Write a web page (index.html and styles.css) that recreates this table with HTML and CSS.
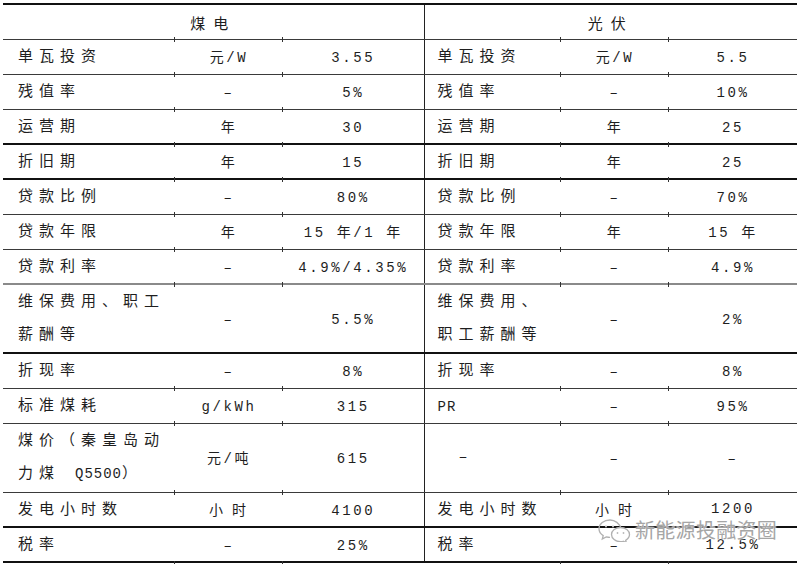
FILE: index.html
```html
<!DOCTYPE html>
<html lang="zh">
<head>
<meta charset="utf-8">
<link rel="stylesheet" href="styles.css">
</head>
<body>
<table class="cmp">
  <colgroup>
    <col class="w1"><col class="w2"><col class="w3"><col class="w4"><col class="w5"><col class="w6">
  </colgroup>
  <tr class="hd">
    <th colspan="3" class="h">煤电</th>
    <th colspan="3" class="h sep">光伏</th>
  </tr>
  <tr class="r">
    <td class="k">单瓦投资</td><td class="v t">元/W</td><td class="v t">3.55</td>
    <td class="k sep">单瓦投资</td><td class="v t">元/W</td><td class="v t">5.5</td>
  </tr>
  <tr class="r">
    <td class="k">残值率</td><td class="v t">–</td><td class="v t">5%</td>
    <td class="k sep">残值率</td><td class="v t">–</td><td class="v t">10%</td>
  </tr>
  <tr class="r thick">
    <td class="k">运营期</td><td class="v t">年</td><td class="v t">30</td>
    <td class="k sep">运营期</td><td class="v t">年</td><td class="v t">25</td>
  </tr>
  <tr class="r thick">
    <td class="k">折旧期</td><td class="v t">年</td><td class="v t">15</td>
    <td class="k sep">折旧期</td><td class="v t">年</td><td class="v t">25</td>
  </tr>
  <tr class="r">
    <td class="k">贷款比例</td><td class="v t">–</td><td class="v t">80%</td>
    <td class="k sep">贷款比例</td><td class="v t">–</td><td class="v t">70%</td>
  </tr>
  <tr class="r">
    <td class="k">贷款年限</td><td class="v t">年</td><td class="v t">15 年/1 年</td>
    <td class="k sep">贷款年限</td><td class="v t">年</td><td class="v t">15 年</td>
  </tr>
  <tr class="r grey">
    <td class="k">贷款利率</td><td class="v t">–</td><td class="v t">4.9%/4.35%</td>
    <td class="k sep">贷款利率</td><td class="v t">–</td><td class="v t">4.9%</td>
  </tr>
  <tr class="r2 thick">
    <td class="k">维保费用、职工<br>薪酬等</td><td class="v t">–</td><td class="v t">5.5%</td>
    <td class="k sep">维保费用、<br>职工薪酬等</td><td class="v t">–</td><td class="v t">2%</td>
  </tr>
  <tr class="r">
    <td class="k">折现率</td><td class="v">–</td><td class="v">8%</td>
    <td class="k sep">折现率</td><td class="v">–</td><td class="v">8%</td>
  </tr>
  <tr class="r">
    <td class="k">标准煤耗</td><td class="v t">g/kWh</td><td class="v t">315</td>
    <td class="k sep"><span class="lt">PR</span></td><td class="v t">–</td><td class="v t">95%</td>
  </tr>
  <tr class="r3">
    <td class="k">煤价（秦皇岛动<br>力煤 <span class="lt">Q5500</span>）</td><td class="v t">元/吨</td><td class="v t">615</td>
    <td class="k sep ind">–</td><td class="v t">–</td><td class="v t">–</td>
  </tr>
  <tr class="r thick">
    <td class="k">发电小时数</td><td class="v t wide">小时</td><td class="v t">4100</td>
    <td class="k sep">发电小时数</td><td class="v t wide">小时</td><td class="v t up">1200</td>
  </tr>
  <tr class="r thick last">
    <td class="k">税率</td><td class="v b">–</td><td class="v b">25%</td>
    <td class="k sep">税率</td><td class="v b">–</td><td class="v b up">12.5%</td>
  </tr>
</table>

<div class="wm">
  <svg class="wm-icon" width="36" height="24" viewBox="0 0 36 24" aria-hidden="true">
    <path d="M13 2C6.9 2 2 6 2 10.8c0 2.8 1.6 5.2 4.2 6.8L5.3 21l3.9-2.1c1.2.3 2.5.5 3.8.5" fill="none" stroke="#b0b0b0" stroke-width="1.3"/>
    <path d="M24 10.5c-1.4-5-6-8.5-11-8.5" fill="none" stroke="#b0b0b0" stroke-width="1.3"/>
    <circle cx="9" cy="8.5" r="1.1" fill="#b8b8b8"/>
    <circle cx="16" cy="8.5" r="1.1" fill="#b8b8b8"/>
    <path d="M23.5 9.5c-5 0-9 3.2-9 7.1s4 7.1 9 7.1c1 0 2-.1 2.9-.4l3 1.6-.7-2.6c2.2-1.3 3.8-3.4 3.8-5.7 0-3.9-4-7.1-9-7.1z" fill="#fff" stroke="#b0b0b0" stroke-width="1.3"/>
    <circle cx="20.5" cy="15" r="0.9" fill="#b8b8b8"/>
    <circle cx="26.5" cy="15" r="0.9" fill="#b8b8b8"/>
  </svg>
  <span class="wm-text">新能源投融资圈</span>
</div>
</body>
</html>
```

FILE: styles.css
```css
html, body {
  margin: 0;
  padding: 0;
  background: #fff;
}

body {
  padding: 3px 0 0 3px;
  position: relative;
  width: 800px;
  height: 564px;
  overflow: hidden;
  box-sizing: border-box;
  font-family: "Liberation Mono", "Noto Sans CJK SC", monospace;
  color: #1e1e1e;
}

.cmp {
  border-collapse: collapse;
  table-layout: fixed;
  width: 794px;
  border-top: 2px solid #111;
}

.w1 { width: 172px; }
.w2 { width: 108px; }
.w3 { width: 141px; }
.w4 { width: 137px; }
.w5 { width: 108px; }
.w6 { width: 128px; }

.cmp th,
.cmp td {
  padding: 0;
  border-bottom: 1px solid #3a3a3a;
  vertical-align: middle;
}

.cmp .sep {
  border-left: 1px solid #222;
}

.hd { height: 35px; }
.r { height: 35px; }
.r2 { height: 68px; }
.r3 { height: 69px; }

.cmp .thick td { border-bottom: 2px solid #111; }
.cmp .grey td { border-bottom: 2px solid #8a8a8a; }

.cmp .h {
  font-family: "Noto Sans CJK SC", sans-serif;
  font-weight: 400;
  font-size: 15px;
  line-height: 20px;
  letter-spacing: 8px;
  text-align: center;
  padding-top: 2px;
}

.cmp .k {
  font-size: 15px;
  letter-spacing: 6px;
  line-height: 20px;
  text-align: left;
  padding-left: 15px;
  padding-top: 3px;
  white-space: nowrap;
}

.cmp .r2 .k,
.cmp .r3 .k {
  line-height: 33px;
  padding-top: 1px;
}

.lt {
  font-size: 14px;
  letter-spacing: 1px;
}

.cmp .k.sep { padding-left: 13px; }
.cmp .r3 .k.ind { padding-left: 34px; padding-top: 0; }

.cmp .v {
  font-size: 14px;
  line-height: 20px;
  letter-spacing: 2.6px;
  text-align: center;
  padding-top: 3px;
  white-space: nowrap;
  position: relative;
}

.cmp .v.wide { letter-spacing: 9px; text-indent: 6px; }

.cmp .v.up { padding-top: 0; }

.t::before {
  content: "";
  position: absolute;
  left: -1px;
  top: -3px;
  width: 1px;
  height: 5px;
  background: #333;
}

.b::after {
  content: "";
  position: absolute;
  left: -1px;
  bottom: -5px;
  width: 1px;
  height: 5px;
  background: #333;
}

.wm {
  position: absolute;
  left: 597px;
  top: 518px;
  display: flex;
  align-items: center;
  gap: 2px;
}

.wm-icon {
  display: block;
}

.wm-text {
  font-family: "Noto Sans CJK SC", sans-serif;
  font-size: 20px;
  line-height: 24px;
  color: #a6a6a6;
  text-shadow: 0 0 2px #fff, 0 0 2px #fff;
  letter-spacing: 0.3px;
}
```
